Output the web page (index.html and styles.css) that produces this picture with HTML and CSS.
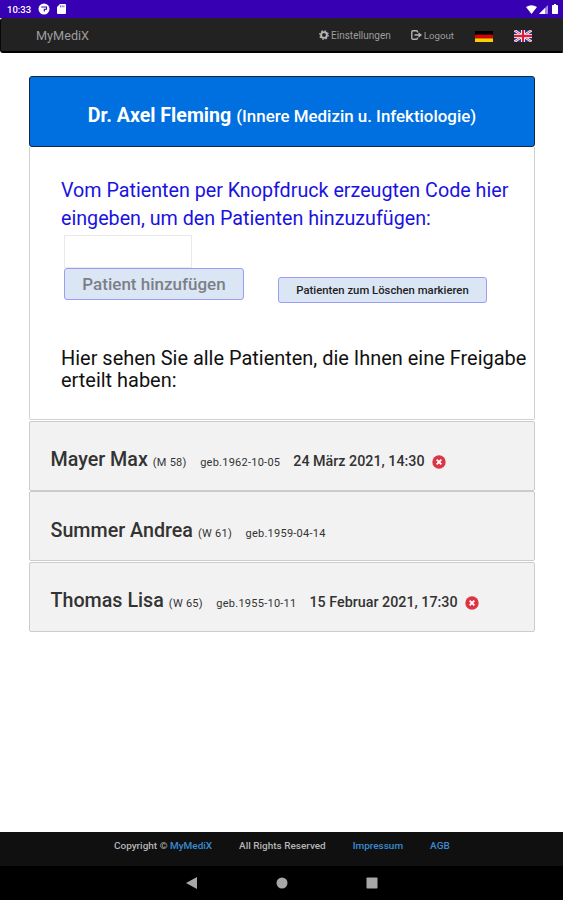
FILE: index.html
```
<!DOCTYPE html>
<html lang="de">
<head>
    <meta charset="UTF-8">
    <meta name="viewport" content="width=device-width, initial-scale=1.0">
    <title>MyMediX</title>
    <link rel="stylesheet" href="styles.css">
</head>
<body>
    <div class="status-bar">
        <span class="clock">10:33</span>
        <svg class="status-app" width="12" height="12" viewBox="0 0 12 12">
            <circle cx="6" cy="6" r="5.5" fill="#fff"/>
            <path d="M3.200 4h5.300v2.200H6.300v2.300" fill="none" stroke="#3700b3" stroke-width="1.100"/>
        </svg>
        <svg class="status-card" width="9" height="10" viewBox="0 0 9 10">
            <path d="M3 0h5a1 1 0 0 1 1 1v8a1 1 0 0 1-1 1H1a1 1 0 0 1-1-1V3z" fill="#fff"/>
            <path d="M3.5 1.5v1.8M5.2 1.5v1.8M6.9 1.5v1.8" stroke="#3700b3" stroke-width=".7"/>
        </svg>
        <div class="status-right">
            <svg width="11" height="9" viewBox="0 0 11 9"><path d="M0 2Q5.500-1.600 11 2L5.500 9z" fill="#fff"/></svg>
            <svg width="9" height="9" viewBox="0 0 9 9">
                <path d="M0 9L9 0v9z" fill="#fff" opacity=".55"/>
                <path d="M0 9L6 3v6z" fill="#fff"/>
            </svg>
            <svg class="battery" width="6" height="10" viewBox="0 0 6 10"><path d="M2 0h2v1h1.300q.7 0 .7.700v7.600q0 .7-.7.700H.7Q0 10 0 9.300V1.700Q0 1 .7 1H2z" fill="#fff"/></svg>
        </div>
    </div>

    <nav class="navbar">
        <a class="brand" href="#">MyMediX</a>
        <a class="nav-link" href="#">
            <svg width="10" height="10" viewBox="0 0 10 10">
                <circle cx="5" cy="5" r="2.900" fill="none" stroke="#b5b5b5" stroke-width="1.900"/>
                <circle cx="5" cy="5" r="4.200" fill="none" stroke="#b5b5b5" stroke-width="1.300" stroke-dasharray="1.650 1.650"/>
            </svg>
            <span class="label-settings">Einstellungen</span>
        </a>
        <a class="nav-link logout" href="#">
            <svg width="11" height="10" viewBox="0 0 11 10">
                <path d="M6.500 2.600V2q0-1.200-1.200-1.200H2Q.8.800.8 2v6q0 1.200 1.200 1.200h3.300q1.200 0 1.200-1.200v-.6" fill="none" stroke="#b5b5b5" stroke-width="1.400"/>
                <path d="M3.500 4.200h4V2.300L11 5 7.500 7.700V5.800h-4z" fill="#b5b5b5"/>
            </svg>
            <span class="label-logout">Logout</span>
        </a>
        <a class="flag" href="#">
            <svg width="18" height="11" viewBox="0 0 18 11">
                <path d="M0 0h18v4H0z" fill="#000"/>
                <path d="M0 3.700h18v3.700H0z" fill="#d80000"/>
                <path d="M0 7.400h18V11H0z" fill="#ffce00"/>
            </svg>
        </a>
        <a class="flag flag-en" href="#">
            <svg width="18" height="12" viewBox="0 0 18 12">
                <path d="M0 0h18v12H0z" fill="#1f3b8c"/>
                <path d="M0 0l18 12M18 0L0 12" stroke="#fff" stroke-width="2.400"/>
                <path d="M0 0l18 12M18 0L0 12" stroke="#d8203c" stroke-width=".8"/>
                <path d="M9 0v12M0 6h18" stroke="#fff" stroke-width="4"/>
                <path d="M9 0v12M0 6h18" stroke="#d8203c" stroke-width="2.300"/>
            </svg>
        </a>
    </nav>

    <main>
        <h1 class="doctor">Dr. Axel Fleming <small>(Innere Medizin u. Infektiologie)</small></h1>
        <section class="panel">
            <p class="code-hint">Vom Patienten per Knopfdruck erzeugten Code hier<br>eingeben, um den Patienten hinzuzufügen:</p>
            <input class="code" type="text">
            <div class="buttons">
                <button class="btn-add">Patient hinzufügen</button>
                <button class="btn-mark">Patienten zum Löschen markieren</button>
            </div>
            <p class="list-hint">Hier sehen Sie alle Patienten, die Ihnen eine Freigabe<br>erteilt haben:</p>
        </section>
        <div class="patient">
            <span class="name">Mayer Max</span>
            <span class="info">(M 58)</span>
            <span class="info born">geb.1962-10-05</span>
            <span class="date">24 März 2021, 14:30</span>
            <svg class="remove" width="14" height="14" viewBox="0 0 14 14">
                <circle cx="7" cy="7" r="6.700" fill="#dc3545"/>
                <path d="M4.700 4.700l4.600 4.600M9.300 4.700L4.700 9.300" stroke="#fff" stroke-width="1.900"/>
            </svg>
        </div>
        <div class="patient">
            <span class="name">Summer Andrea</span>
            <span class="info">(W 61)</span>
            <span class="info born">geb.1959-04-14</span>
        </div>
        <div class="patient">
            <span class="name">Thomas Lisa</span>
            <span class="info">(W 65)</span>
            <span class="info born">geb.1955-10-11</span>
            <span class="date">15 Februar 2021, 17:30</span>
            <svg class="remove" width="14" height="14" viewBox="0 0 14 14">
                <circle cx="7" cy="7" r="6.700" fill="#dc3545"/>
                <path d="M4.700 4.700l4.600 4.600M9.300 4.700L4.700 9.300" stroke="#fff" stroke-width="1.900"/>
            </svg>
        </div>
    </main>

    <footer>
        <span>Copyright © <a href="#">MyMediX</a></span>
        <span>All Rights Reserved</span>
        <a href="#">Impressum</a>
        <a href="#">AGB</a>
    </footer>

    <div class="system-nav">
        <svg width="12" height="12" viewBox="0 0 12 12"><path d="M0 6L11 0v12z" fill="#a8a8a8"/></svg>
        <svg width="12" height="12" viewBox="0 0 12 12"><circle cx="6" cy="6" r="5.500" fill="#a8a8a8"/></svg>
        <svg width="12" height="12" viewBox="0 0 12 12"><rect x=".5" y=".5" width="11" height="11" rx=".8" fill="#a8a8a8"/></svg>
    </div>
</body>
</html>
```
FILE: styles.css
```
* {
    box-sizing: border-box;
}
body {
    margin: 0;
    height: 900px;
    display: flex;
    flex-direction: column;
    font-family: Roboto, sans-serif;
    background-color: #fff;
    color: #333;
    overflow: hidden;
}
a {
    text-decoration: none;
}
svg {
    display: block;
    flex: none;
}
.status-bar {
    height: 18px;
    display: flex;
    align-items: center;
    padding: 0 5px 0 7px;
    background-color: #3700b3;
    color: #fff;
}
.clock {
    width: 25px;
    font-size: 9.5px;
    font-weight: 500;
    white-space: nowrap;
}
.status-app {
    margin-left: 6px;
}
.status-card {
    margin-left: 7px;
}
.status-right {
    margin-left: auto;
    display: flex;
    align-items: center;
    gap: 2px;
}
.battery {
    margin-left: 2px;
}
.navbar {
    height: 35px;
    display: flex;
    align-items: center;
    padding: 0 30px 0 35px;
    background-color: #222;
    border: 1px solid #080808;
    border-top-color: #222;
    border-right-color: #222;
    border-bottom: 2px solid #000;
    border-radius: 3px 0 0 3px;
}
.brand {
    margin-right: auto;
    font-size: 12.7px;
    color: #9d9d9d;
}
.nav-link {
    display: flex;
    align-items: center;
    gap: 2px;
    font-size: 10px;
    color: #9d9d9d;
}
.logout {
    margin-left: 20px;
    gap: 2px;
    font-size: 9.7px;
}
.flag {
    margin: 2px 0 0 21px;
}
main {
    flex: 1;
    padding: 23px 28px 0 29px;
}
.doctor {
    height: 71px;
    margin: 0;
    display: flex;
    align-items: baseline;
    justify-content: center;
    gap: 5px;
    padding: 27px 0 0;
    background-color: #0070e0;
    border: 1px solid #14273d;
    border-radius: 3px;
    color: #fff;
    font-size: 19.6px;
    line-height: 24px;
    font-weight: 700;
}
.doctor small {
    font-size: 16.9px;
    font-weight: 500;
}
.panel {
    height: 273px;
    padding: 30px 0 0 31px;
    border: 1px solid #d0d0d0;
    border-top: none;
    border-radius: 0 0 2px 2px;
}
.code-hint {
    margin: 0;
    color: #1a12e0;
    font-size: 19.7px;
    line-height: 28px;
    white-space: nowrap;
}
.code {
    display: block;
    width: 128px;
    height: 33px;
    margin: 2px 0 0 3px;
    border: 1px solid #e9e9e9;
    background-color: #fff;
}
.buttons {
    display: flex;
    align-items: flex-start;
    gap: 34px;
    margin-left: 3px;
}
.buttons button {
    padding: 0;
    font-family: inherit;
    background-color: #dbe6f5;
    border: 1px solid #9d9df5;
    border-radius: 3px;
    white-space: nowrap;
}
.btn-add {
    width: 180px;
    height: 32px;
    font-size: 17px;
    font-weight: 500;
    color: #7b8087;
}
.btn-mark {
    width: 209px;
    height: 26px;
    margin-top: 9px;
    font-size: 11.3px;
    font-weight: 500;
    color: #222;
}
.list-hint {
    margin: 44px 0 0;
    color: #111;
    font-size: 19.95px;
    line-height: 22px;
    white-space: nowrap;
}
.patient {
    height: 70px;
    margin-top: 0.6px;
    display: flex;
    align-items: baseline;
    padding: 25.4px 0 0 20.5px;
    background-color: #f2f2f2;
    border: 1px solid #ccc;
    border-radius: 2px;
    white-space: nowrap;
}
.name {
    font-size: 19.7px;
    line-height: 26px;
    font-weight: 500;
}
.info {
    margin-left: 5px;
    font-size: 11px;
    letter-spacing: 0.25px;
}
.born {
    margin-left: 13.5px;
}
.date {
    margin-left: 13px;
    font-size: 14.3px;
    font-weight: 500;
}
.remove {
    align-self: flex-start;
    margin: 8px 0 0 7px;
}
footer {
    height: 34px;
    display: flex;
    gap: 27px;
    padding: 8px 0 0 114px;
    background-color: #101010;
    color: #b5b5b5;
    font-size: 9.98px;
    line-height: 11px;
    font-weight: 500;
}
footer a {
    color: #3a8bd0;
}
.system-nav {
    height: 34px;
    display: flex;
    align-items: center;
    justify-content: center;
    gap: 78px;
    background-color: #000;
}
```
